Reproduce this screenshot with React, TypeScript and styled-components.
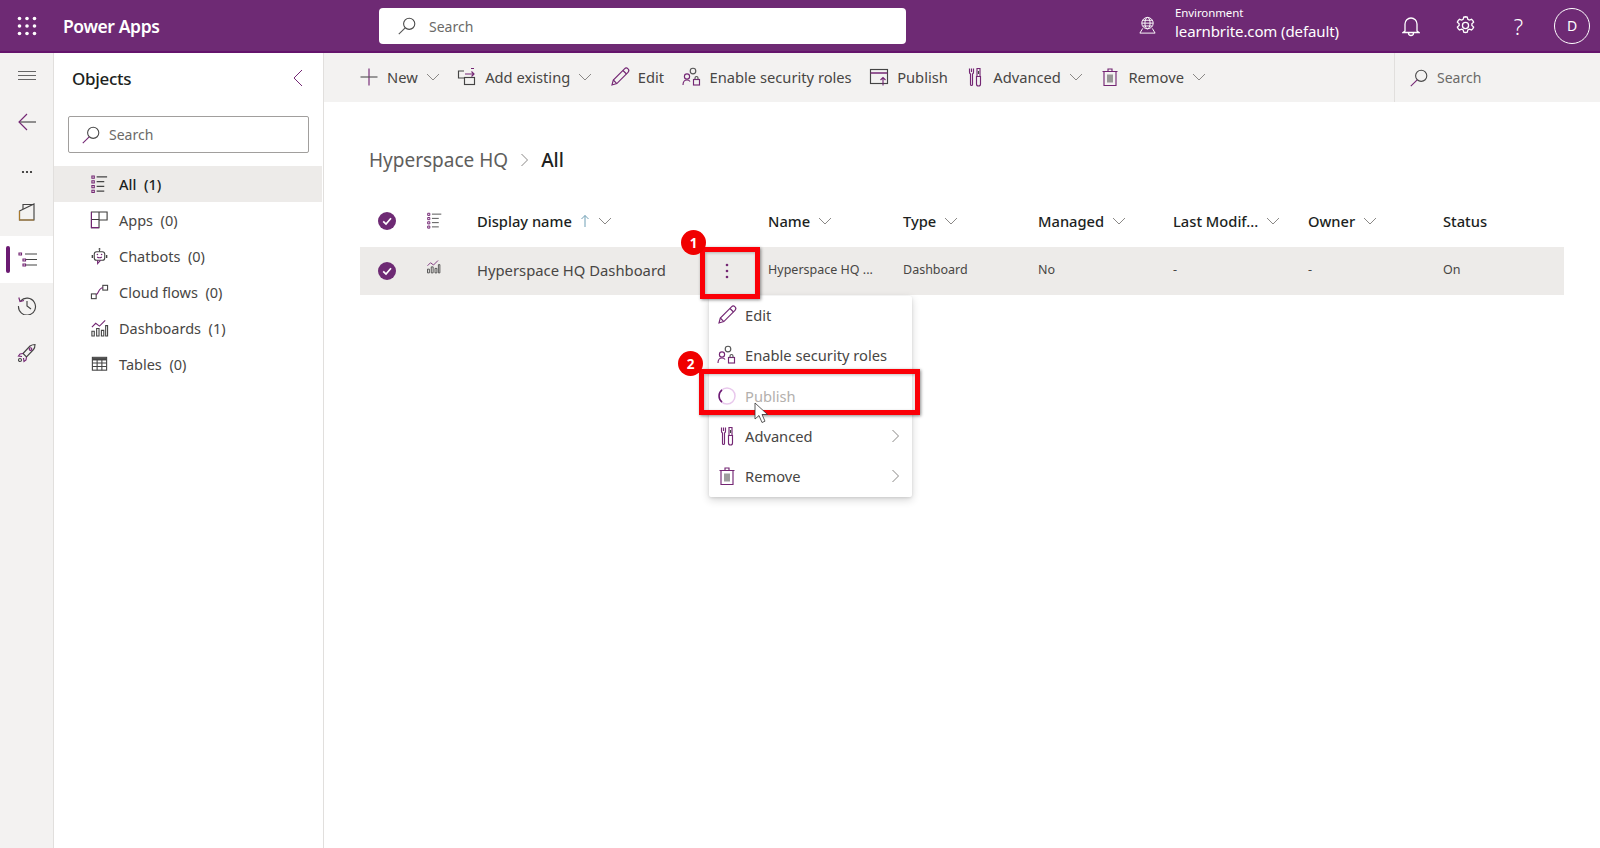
import React from "react";
import styled, { createGlobalStyle } from "styled-components";

const PURPLE = "#6e2a74";
const DARK = "#323130";
const ACCENT = "#742774";
const FONT = `"Noto Sans", "Open Sans", "Liberation Sans", sans-serif`;

const Global = createGlobalStyle`
  html, body { margin: 0; padding: 0; background: #fff; }
  body { font-family: ${FONT}; color: ${DARK}; }
  * { box-sizing: border-box; }
`;

const Page = styled.div`
  position: relative;
  width: 1600px;
  height: 848px;
  overflow: hidden;
  display: flex;
  flex-direction: column;
`;

/* ---------- header ---------- */
const Header = styled.header`
  height: 53px;
  flex: none;
  background: ${PURPLE};
  border-bottom: 2px solid #64146c;
  display: flex;
  align-items: center;
  color: #fff;
`;
const Waffle = styled.div`
  width: 54px;
  display: flex;
  justify-content: center;
  padding-right: 1px;
`;
const Brand = styled.div`
  width: 315px;
  padding-left: 9px;
  font-size: 17.5px;
  font-weight: 600;
  letter-spacing: -0.4px;
`;
const HeaderSearch = styled.div`
  width: 527px;
  height: 36px;
  margin-left: 10px;
  margin-top: 1px;
  background: #fff;
  border-radius: 4px;
  display: flex;
  align-items: center;
  gap: 12px;
  padding-left: 18px;
  font-size: 14px;
  color: #6b6a68;
`;
const EnvIconWrap = styled.div`
  margin-left: 230px;
  width: 22px;
  display: flex;
  justify-content: center;
`;
const Env = styled.div`
  margin-left: 17px;
  margin-bottom: 4px;
  width: 209px;
  display: flex;
  flex-direction: column;
`;
const EnvLabel = styled.div`
  font-size: 11.5px;
  line-height: 16px;
  letter-spacing: -0.1px;
`;
const EnvName = styled.div`
  font-size: 15px;
  line-height: 21px;
  letter-spacing: -0.1px;
`;
const HeaderBtn = styled.div<{ $w: number }>`
  width: ${(p) => p.$w}px;
  display: flex;
  justify-content: center;
  font-size: 22px;
  font-weight: 300;
`;
const Avatar = styled.div`
  width: 36px;
  height: 36px;
  margin-left: 9px;
  border: 1px solid #fff;
  border-radius: 50%;
  display: flex;
  align-items: center;
  justify-content: center;
  font-size: 14px;
`;

/* ---------- body ---------- */
const Body = styled.div`
  flex: 1;
  display: flex;
  min-height: 0;
`;
const Rail = styled.nav`
  width: 54px;
  flex: none;
  background: #f3f2f1;
  border-right: 1px solid #e1dfdd;
  display: flex;
  flex-direction: column;
  align-items: stretch;
`;
const RailItem = styled.div<{ $h: number; $active?: boolean; $top?: number; $bottom?: number }>`
  height: ${(p) => p.$h}px;
  position: relative;
  display: flex;
  align-items: center;
  justify-content: center;
  background: ${(p) => (p.$active ? "#fff" : "transparent")};
  padding: ${(p) => p.$top ?? 0}px 0 ${(p) => p.$bottom ?? 0}px ${(p) => (p.$active ? 2 : 0)}px;
`;
const ActiveBar = styled.span`
  position: absolute;
  left: 6px;
  top: 10px;
  width: 4px;
  height: 27px;
  border-radius: 2px;
  background: #6b1a72;
`;

const Side = styled.aside`
  width: 270px;
  flex: none;
  background: #fff;
  border-right: 1px solid #e1dfdd;
  display: flex;
  flex-direction: column;
`;
const SideHead = styled.div`
  height: 50px;
  padding: 0 20px 0 18px;
  display: flex;
  align-items: center;
  justify-content: space-between;
  font-size: 17px;
  font-weight: 500;
  letter-spacing: -0.3px;
  color: #201f1e;
`;
const SideSearch = styled.div`
  margin: 13px 14px 0 14px;
  height: 37px;
  border: 1px solid #a19f9d;
  border-radius: 2px;
  display: flex;
  align-items: center;
  gap: 8px;
  padding-left: 12px;
  font-size: 14px;
  color: #6b6a68;
`;
const SideList = styled.div`
  margin-top: 13px;
  display: flex;
  flex-direction: column;
`;
const SideItem = styled.div<{ $active?: boolean }>`
  height: 36px;
  padding: 0 0 1px 36px;
  display: flex;
  align-items: center;
  gap: 10px;
  font-size: 14.5px;
  white-space: pre;
  background: ${(p) => (p.$active ? "#edebe9" : "transparent")};
  color: ${(p) => (p.$active ? "#201f1e" : "#484644")};
  font-weight: ${(p) => (p.$active ? 500 : 400)};
  margin-right: 1px;
`;
const SideIcon = styled.span`
  width: 19px;
  display: flex;
  justify-content: center;
`;

const Main = styled.main`
  flex: 1;
  min-width: 0;
  display: flex;
  flex-direction: column;
`;
const CommandBar = styled.div`
  height: 49px;
  flex: none;
  background: #f3f2f1;
  display: flex;
  align-items: center;
  padding-left: 35px;
`;
const Cmds = styled.div`
  width: 1035px;
  display: flex;
  align-items: center;
  gap: 17.5px;
  padding-bottom: 1px;
`;
const Cmd = styled.div`
  display: flex;
  align-items: center;
  gap: 8px;
  font-size: 14.7px;
  color: #484644;
  white-space: nowrap;
`;
const CmdSearch = styled.div`
  flex: 1;
  height: 100%;
  border-left: 1px solid #e1dfdd;
  display: flex;
  align-items: center;
  gap: 8px;
  padding-left: 14px;
  font-size: 14px;
  color: #6b6a68;
`;
const Content = styled.div`
  flex: 1;
  padding: 42px 36px 0 36px;
`;
const Crumbs = styled.div`
  height: 32px;
  margin-left: 9px;
  display: flex;
  align-items: center;
  gap: 12px;
  font-size: 19px;
  color: #605e5c;
`;
const CrumbNow = styled.span`
  color: #201f1e;
  font-weight: 500;
`;
const Grid = styled.div`
  margin-top: 22px;
  display: flex;
  flex-direction: column;
`;
const GridRow = styled.div<{ $h: number; $sel?: boolean; $lift: number }>`
  height: ${(p) => p.$h}px;
  padding-bottom: ${(p) => p.$lift}px;
  display: grid;
  grid-template-columns: 54px 63px 291px repeat(6, 135px) 1fr;
  align-items: center;
  background: ${(p) => (p.$sel ? "#edebe9" : "transparent")};
`;
const Cell = styled.div<{ $center?: boolean }>`
  display: flex;
  align-items: center;
  justify-content: ${(p) => (p.$center ? "center" : "flex-start")};
  white-space: nowrap;
  font-size: 12.5px;
  color: #484644;
`;
const IconCell = styled(Cell)<{ $lift?: number }>`
  padding-left: 12px;
  margin-bottom: ${(p) => p.$lift ?? 0}px;
`;
const CheckCell = styled(Cell)<{ $drop?: number }>`
  justify-content: center;
  margin-top: ${(p) => p.$drop ?? 0}px;
`;
const HeadCell = styled(Cell)`
  font-size: 14.7px;
  font-weight: 500;
  color: #201f1e;
  gap: 8px;
`;
const NameCell = styled(Cell)`
  font-size: 14.8px;
  color: #484644;
`;
const SelCheck = styled.div`
  width: 18px;
  height: 18px;
  border-radius: 50%;
  background: ${PURPLE};
  display: flex;
  align-items: center;
  justify-content: center;
`;

/* ---------- floating ---------- */
const Menu = styled.div`
  position: absolute;
  left: 709px;
  top: 296px;
  width: 203px;
  height: 201px;
  background: #fff;
  border-radius: 2px;
  box-shadow: 0 3px 8px rgba(0, 0, 0, 0.16), 0 1px 3px rgba(0, 0, 0, 0.1);
  display: flex;
  flex-direction: column;
`;
const MenuItem = styled.div<{ $muted?: boolean }>`
  height: 40.3px;
  flex: none;
  display: flex;
  align-items: center;
  gap: 8px;
  padding: 0 12px 0 8px;
  font-size: 14.7px;
  color: ${(p) => (p.$muted ? "#b3b0ad" : "#484644")};
  &:first-child {
    margin-top: -1px;
  }
`;
const MenuLabel = styled.span`
  flex: 1;
`;
const RedBox = styled.div<{ $l: number; $t: number; $w: number; $h: number }>`
  position: absolute;
  left: ${(p) => p.$l}px;
  top: ${(p) => p.$t}px;
  width: ${(p) => p.$w}px;
  height: ${(p) => p.$h}px;
  border: 5px solid #fb0007;
  box-shadow: 1px 1px 3px rgba(0, 0, 0, 0.45), inset 1px 1px 3px rgba(0, 0, 0, 0.25);
`;
const Badge = styled.div<{ $l: number; $t: number }>`
  position: absolute;
  left: ${(p) => p.$l}px;
  top: ${(p) => p.$t}px;
  width: 25px;
  height: 25px;
  border-radius: 50%;
  background: #f00000;
  color: #fff;
  font-size: 13.5px;
  font-weight: 700;
  display: flex;
  align-items: center;
  justify-content: center;
`;
const Cursor = styled.svg`
  position: absolute;
  left: 754px;
  top: 402px;
`;
const KebabSlot = styled.div`
  position: absolute;
  left: 725px;
  top: 263px;
  display: flex;
`;

/* ---------- icons ---------- */
type IP = { s?: number; c?: string };
const Ico: React.FC<React.PropsWithChildren<{ s?: number; c?: string }>> = ({ s = 20, c = DARK, children }) => (
  <svg width={s} height={s} viewBox="0 0 20 20" fill="none" stroke={c} strokeWidth={1.15}>
    {children}
  </svg>
);
const SearchIcon: React.FC<IP> = ({ s = 20, c = ACCENT }) => (
  <svg width={s} height={s} viewBox="0 0 20 20" fill="none" strokeWidth={1.1}>
    <circle cx="12.2" cy="7.8" r="5.6" stroke="#4a4a4a" />
    <path d="M8.2 11.8 1.8 18.2" stroke={c} />
  </svg>
);
const Chevron: React.FC<{ c?: string }> = ({ c = "#8a8886" }) => (
  <svg width="14" height="8" viewBox="0 0 14 8" fill="none" stroke={c}>
    <path d="M1 1l6 6 6-6" />
  </svg>
);
const ChevRight = () => (
  <svg width="9" height="14" viewBox="0 0 9 14" fill="none" stroke="#8a8886">
    <path d="M1.500 1l6 6-6 6" />
  </svg>
);
const PlusI = () => (
  <Ico>
    <path d="M10 1.500v17" stroke={ACCENT} />
    <path d="M1.500 10h17" stroke="#555" />
  </Ico>
);
const AddExistingI = () => (
  <Ico>
    <path d="M7 4H1.500v7H7" stroke="#444" />
    <rect x="7.500" y="10.500" width="10" height="7" stroke="#444" />
    <path d="M8 7h9M14.500 4.500 17 7l-2.500 2.500M14 1.500h3" stroke={ACCENT} />
  </Ico>
);
const EditI = () => (
  <Ico>
    <path d="M2 18l1.300-5L14.500 1.800a2.100 2.100 0 0 1 3.500 3.500L6.800 16.600z" stroke={ACCENT} />
    <path d="M3.300 13l3.500 3.600M13 3.500l3.500 3.500" stroke={ACCENT} />
  </Ico>
);
const RolesI = () => (
  <Ico>
    <circle cx="11" cy="4" r="2.800" stroke="#555" />
    <circle cx="5" cy="9.500" r="2.600" stroke={ACCENT} />
    <path d="M1 18c0-3.500 1.500-5 4-5 1.500 0 2.500.5 3 1.500" stroke={ACCENT} />
    <rect x="11.500" y="12.500" width="6" height="5.500" stroke={ACCENT} />
    <path d="M13 12.500v-1.500a1.500 1.500 0 0 1 3 0v1.500" stroke="#555" />
  </Ico>
);
const PublishI = () => (
  <Ico>
    <rect x="1.500" y="2.500" width="17" height="14" stroke="#444" />
    <path d="M1.500 6h17" stroke={ACCENT} strokeWidth={1.500} />
    <path d="M14 18.500V10.500M11.500 13 14 10.500 16.500 13" stroke={ACCENT} />
  </Ico>
);
const AdvancedI = () => (
  <Ico>
    <path d="M4.500 1.500v3.500a2 2 0 0 0 1 2v10.500a1 1 0 0 0 2 0V7a2 2 0 0 0 1-2V1.500M6.500 1.500v3.500" stroke={ACCENT} />
    <path d="M12 1.500h3v8h-3zM11.500 9.500h4v7.500a2 2 0 0 1-4 0z" stroke={ACCENT} />
    <path d="M13.500 4v3" stroke="#444" />
  </Ico>
);
const RemoveI = () => (
  <Ico>
    <path d="M4 4.500v14h12v-14M2.500 4.500h15M8 4.500V2h4v2.500" stroke={ACCENT} />
    <path d="M8 7.500v8M10 7.500v8M12 7.500v8" stroke="#555" />
  </Ico>
);
const ListI: React.FC<IP> = ({ s = 20, c = "#444" }) => (
  <Ico s={s}>
    <path d="M7 2.500h11M7 7.500h8M7 12.500h8M7 17.500h8" stroke={c} />
    <path d="M2 1.500h2.500v2.500H2zM2 6.500h2.500v2.500H2zM2 11.500h2.500V14H2zM2 16.500h2.500V19H2z" stroke={ACCENT} />
  </Ico>
);
const AppsI = () => (
  <Ico>
    <path d="M9.500 1.500h8.500v8.500h-8.500zM1.500 1.500h8v8h-8zM1.500 9.500h8v8.500h-8z" stroke="#3b3a39" />
    <path d="M1.500 1.500v16.500h8" stroke={ACCENT} />
  </Ico>
);
const BotI = () => (
  <Ico>
    <circle cx="10" cy="2.500" r="1" fill="#444" stroke="none" />
    <path d="M10 3.500v2" stroke="#444" />
    <rect x="4.500" y="5.500" width="11" height="9" rx="2.500" stroke="#444" />
    <path d="M2.500 9v3M17.500 9v3" stroke="#444" strokeWidth={1.500} />
    <path d="M8 14.500V18l3-3.500M7.500 11c1.500 1 3.500 1 5 0" stroke={ACCENT} />
    <circle cx="7.800" cy="8.500" r=".8" fill={ACCENT} stroke="none" />
    <circle cx="12.200" cy="8.500" r=".8" fill={ACCENT} stroke="none" />
  </Ico>
);
const FlowI = () => (
  <Ico>
    <rect x="1.500" y="12" width="5" height="5" stroke="#444" />
    <rect x="13.500" y="3" width="5" height="5" stroke="#444" />
    <path d="M6.500 13c2.500-1 2.500-7.500 7-7.500" stroke={ACCENT} />
  </Ico>
);
const DashI: React.FC<IP> = ({ s = 20 }) => (
  <Ico s={s}>
    <path d="M2 18.500v-5h2.500v5zM7 18.500v-8h2.500v8zM12 18.500v-6h2.500v6zM16.500 18.500v-11h2v11z" stroke="#444" />
    <path d="M2 9l4-4 4 3 6-6" stroke={ACCENT} />
  </Ico>
);
const TableI = () => (
  <Ico>
    <rect x="2.500" y="3" width="15" height="13.500" stroke="#444" />
    <path d="M2.500 5h15" stroke="#444" strokeWidth={2.500} />
    <path d="M2.500 9h15M2.500 12.700h15M7.500 5v11.500M12.500 5v11.500" stroke="#444" />
  </Ico>
);
const KebabI = () => (
  <svg width="4" height="16" viewBox="0 0 4 16" fill={ACCENT}>
    <circle cx="2" cy="2" r="1.300" />
    <circle cx="2" cy="8" r="1.300" />
    <circle cx="2" cy="14" r="1.300" />
  </svg>
);
const Tick = () => (
  <svg width="12" height="12" viewBox="0 0 12 12" fill="none" stroke="#fff" strokeWidth={1.700}>
    <path d="M2.200 6.300 5 9l5-5.700" />
  </svg>
);

const commands: [React.ReactNode, string, boolean][] = [
  [<PlusI />, "New", true],
  [<AddExistingI />, "Add existing", true],
  [<EditI />, "Edit", false],
  [<RolesI />, "Enable security roles", false],
  [<PublishI />, "Publish", false],
  [<AdvancedI />, "Advanced", true],
  [<RemoveI />, "Remove", true],
];
const objects: [React.ReactNode, string, string][] = [
  [<ListI />, "All", "(1)"],
  [<AppsI />, "Apps", "(0)"],
  [<BotI />, "Chatbots", "(0)"],
  [<FlowI />, "Cloud flows", "(0)"],
  [<DashI />, "Dashboards", "(1)"],
  [<TableI />, "Tables", "(0)"],
];
const columns = ["Name", "Type", "Managed", "Last Modif...", "Owner"];

export default function App() {
  return (
    <Page>
      <Global />
      <Header>
        <Waffle>
          <svg width="20" height="20" viewBox="0 0 20 20" fill="#fff">
            {[2.5, 10, 17.5].flatMap((y) =>
              [2.5, 10, 17.5].map((x) => <circle key={`${x}-${y}`} cx={x} cy={y} r="1.800" />)
            )}
          </svg>
        </Waffle>
        <Brand>Power Apps</Brand>
        <HeaderSearch>
          <SearchIcon c="#555" />
          Search
        </HeaderSearch>
        <EnvIconWrap>
          <svg width="19" height="19" viewBox="0 0 20 20" fill="none" stroke="#fff">
            <circle cx="10" cy="7.500" r="6" />
            <ellipse cx="10" cy="7.500" rx="2.700" ry="6" />
            <path d="M4 7.500h12M5 4.500h10M5 10.500h10M5 13 2 18h16l-3-5" />
          </svg>
        </EnvIconWrap>
        <Env>
          <EnvLabel>Environment</EnvLabel>
          <EnvName>learnbrite.com (default)</EnvName>
        </Env>
        <HeaderBtn $w={54}>
          <svg width="18" height="22" viewBox="0 0 18 22" fill="none" stroke="#fff" strokeWidth={1.300}>
            <path d="M3 16V9a6 6 0 0 1 12 0v7l2 1.500H1zM6.500 18a2.500 2.500 0 0 0 5 0" />
          </svg>
        </HeaderBtn>
        <HeaderBtn $w={54}>
          <svg width="21" height="21" viewBox="0 0 24 24" fill="none" stroke="#fff" strokeWidth={1.500}>
            <circle cx="12" cy="12" r="3.500" />
            <path d="M12 2l2 .3.700 2.700 1.600.8 2.600-.9 1.500 1.500.9 1.800-2 1.900v1.800l2 1.900-.9 1.800-1.500 1.500-2.600-.9-1.600.8-.7 2.700-2 .3-2-.3-.7-2.700-1.600-.8-2.600.9-1.500-1.500-.9-1.800 2-1.900v-1.800l-2-1.900.9-1.800 1.500-1.500 2.600.9 1.600-.8.700-2.700z" />
          </svg>
        </HeaderBtn>
        <HeaderBtn $w={53}>?</HeaderBtn>
        <Avatar>D</Avatar>
      </Header>
      <Body>
        <Rail>
          <RailItem $h={46}>
            <svg width="20" height="10" viewBox="0 0 20 10" stroke="#666">
              <path d="M1 .5h18M1 4.500h18M1 8.500h18" />
            </svg>
          </RailItem>
          <RailItem $h={46}>
            <Ico>
              <path d="M19 10H2" stroke="#444" />
              <path d="M10 2 2 10l8 8" stroke={ACCENT} />
            </Ico>
          </RailItem>
          <RailItem $h={46} $top={8}>
            <svg width="12" height="4" viewBox="0 0 12 4" fill="#201f1e">
              <circle cx="2" cy="2" r="1.100" />
              <circle cx="6" cy="2" r="1.100" />
              <circle cx="10" cy="2" r="1.100" />
            </svg>
          </RailItem>
          <RailItem $h={45} $bottom={4}>
            <Ico>
              <path d="M2.500 9 17 2v16H2.500z" stroke="#444" />
              <path d="M6 7V2.500h11" stroke="#444" />
              <path d="M2.500 9v9H17" stroke="#a8792b" />
            </Ico>
          </RailItem>
          <RailItem $h={47} $active>
            <ActiveBar />
            <Ico>
              <path d="M7 4h12M7 9.500h12M7 15h12" stroke="#444" />
              <path d="M1 3h2.500v2H1zM5 9h2.500v2H5zM5 14h2.500v2H5z" stroke={ACCENT} />
            </Ico>
          </RailItem>
          <RailItem $h={47} $bottom={3}>
            <Ico>
              <path d="M3.600 6A8.500 8.500 0 1 1 1.500 11" stroke="#444" />
              <path d="M1.800 2.500 3 6.500l4-1" stroke={ACCENT} />
              <path d="M10 6v5l4 3" stroke="#444" />
            </Ico>
          </RailItem>
          <RailItem $h={49} $bottom={3}>
            <Ico>
              <path d="M6 10.500 13 3c1.500-1 3.500-1.500 5-1.500 0 2-.5 4-1.500 5L9.500 14z" stroke="#444" />
              <path d="M6 10.500 3 11l-1.500 2 3.500.5M9.500 14l-.5 3-2 1.500-.5-3.500" stroke={ACCENT} />
              <circle cx="13.500" cy="6" r="1.300" stroke={ACCENT} />
              <circle cx="3" cy="17" r="1.500" stroke="#444" />
            </Ico>
          </RailItem>
        </Rail>
        <Side>
          <SideHead>
            Objects
            <svg width="11" height="18" viewBox="0 0 11 18" fill="none" stroke={ACCENT}>
              <path d="M10 1 2 9l8 8" />
            </svg>
          </SideHead>
          <SideSearch>
            <SearchIcon />
            Search
          </SideSearch>
          <SideList>
            {objects.map(([icon, label, n], i) => (
              <SideItem key={label} $active={i === 0}>
                <SideIcon>{icon}</SideIcon>
                {label}  {n}
              </SideItem>
            ))}
          </SideList>
        </Side>
        <Main>
          <CommandBar>
            <Cmds>
              {commands.map(([icon, label, chev]) => (
                <Cmd key={label}>
                  {icon}
                  {label}
                  {chev && <Chevron />}
                </Cmd>
              ))}
            </Cmds>
            <CmdSearch>
              <SearchIcon />
              Search
            </CmdSearch>
          </CommandBar>
          <Content>
            <Crumbs>
              Hyperspace HQ
              <svg width="9" height="14" viewBox="0 0 9 14" fill="none" stroke="#8a8886">
                <path d="M1.500 1l6 6-6 6" />
              </svg>
              <CrumbNow>All</CrumbNow>
            </Crumbs>
            <Grid>
              <GridRow $h={49} $lift={4}>
                <CheckCell>
                  <SelCheck>
                    <Tick />
                  </SelCheck>
                </CheckCell>
                <IconCell>
                  <ListI s={17} c="#555" />
                </IconCell>
                <HeadCell>
                  Display name
                  <svg width="10" height="14" viewBox="0 0 10 14" fill="none" stroke="#6f9fb5">
                    <path d="M5 13V1.500M1.500 5 5 1.500 8.500 5" />
                  </svg>
                  <Chevron />
                </HeadCell>
                {columns.map((c) => (
                  <HeadCell key={c}>
                    {c}
                    <Chevron />
                  </HeadCell>
                ))}
                <HeadCell>Status</HeadCell>
              </GridRow>
              <GridRow $h={48} $sel $lift={3}>
                <CheckCell $drop={3}>
                  <SelCheck>
                    <Tick />
                  </SelCheck>
                </CheckCell>
                <IconCell $lift={6}>
                  <DashI s={15} />
                </IconCell>
                <NameCell>Hyperspace HQ Dashboard</NameCell>
                <Cell>Hyperspace HQ ...</Cell>
                <Cell>Dashboard</Cell>
                <Cell>No</Cell>
                <Cell>-</Cell>
                <Cell>-</Cell>
                <Cell>On</Cell>
              </GridRow>
            </Grid>
          </Content>
        </Main>
      </Body>

      <Menu>
        <MenuItem>
          <EditI />
          <MenuLabel>Edit</MenuLabel>
        </MenuItem>
        <MenuItem>
          <RolesI />
          <MenuLabel>Enable security roles</MenuLabel>
        </MenuItem>
        <MenuItem $muted>
          <svg width="20" height="20" viewBox="0 0 20 20" fill="none">
            <circle cx="10" cy="10" r="8" stroke="#e8c8ec" strokeWidth={1.500} />
            <path d="M5 16.200A8 8 0 0 1 5 3.800" stroke="#6b1a72" strokeWidth={1.500} />
          </svg>
          <MenuLabel>Publish</MenuLabel>
        </MenuItem>
        <MenuItem>
          <AdvancedI />
          <MenuLabel>Advanced</MenuLabel>
          <ChevRight />
        </MenuItem>
        <MenuItem>
          <RemoveI />
          <MenuLabel>Remove</MenuLabel>
          <ChevRight />
        </MenuItem>
      </Menu>

      <KebabSlot>
        <KebabI />
      </KebabSlot>

      <RedBox $l={700} $t={247} $w={60} $h={52} />
      <RedBox $l={699} $t={369} $w={221} $h={46} />
      <Badge $l={681} $t={230}>1</Badge>
      <Badge $l={678} $t={351}>2</Badge>
      <Cursor width="15" height="24" viewBox="0 0 15 24" fill="#fff" stroke="#333" strokeWidth={0.800}>
        <path d="M1 1v16l4-3.500 3 7 3-1.300-3-6.700h5.500z" />
      </Cursor>
    </Page>
  );
}
